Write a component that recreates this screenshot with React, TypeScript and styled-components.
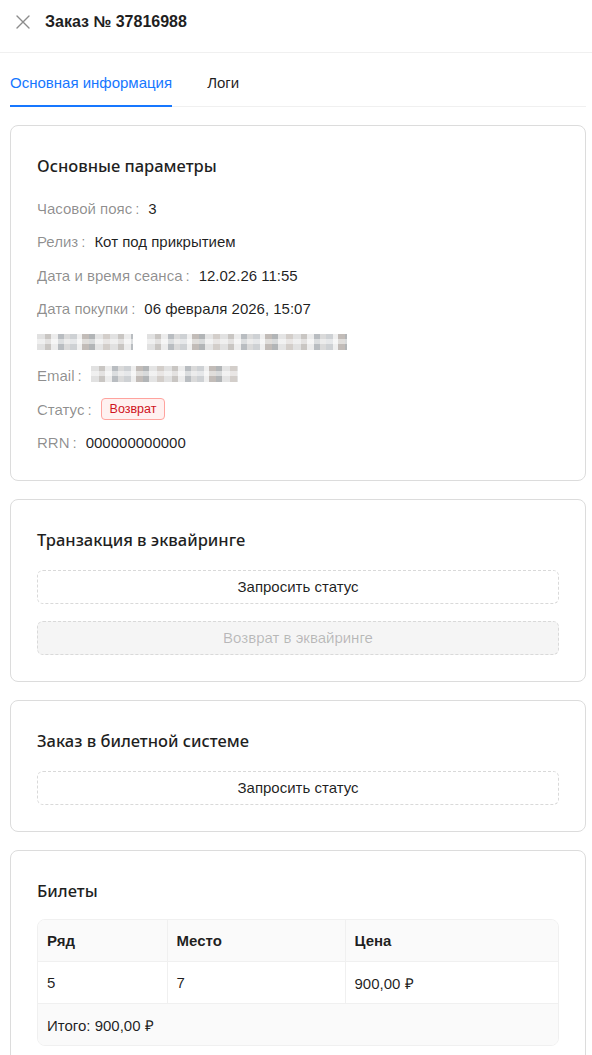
import React, { useState } from 'react';
import styled, { createGlobalStyle } from 'styled-components';

const GlobalStyle = createGlobalStyle`
  html, body {
    margin: 0;
    padding: 0;
    background: #fff;
    font-family: "Liberation Sans", Arial, sans-serif;
    color: rgba(0, 0, 0, 0.88);
  }
  * { box-sizing: border-box; }
`;

const Drawer = styled.div`
  width: 592px;
  min-height: 1055px;
  display: flex;
  flex-direction: column;
`;

const Header = styled.div`
  height: 53px;
  display: flex;
  align-items: center;
  gap: 13px;
  padding: 0 14px 8px;
  border-bottom: 1px solid #f0f0f0;
`;

const CloseBtn = styled.button`
  width: 18px;
  height: 18px;
  padding: 0;
  border: none;
  background: none;
  display: flex;
  align-items: center;
  justify-content: center;
  cursor: pointer;
`;

const Title = styled.div`
  font-size: 16px;
  font-weight: 700;
  color: #1f1f1f;
`;

const Body = styled.div`
  padding: 0 6px 0 10px;
  display: flex;
  flex-direction: column;
`;

const TabBar = styled.div`
  display: flex;
  gap: 35px;
  border-bottom: 1px solid #f0f0f0;
  margin-bottom: 18px;
`;

const Tab = styled.button<{ $active?: boolean }>`
  border: none;
  background: none;
  padding: 21px 0 14px;
  font-family: inherit;
  font-size: 15px;
  color: ${(p) => (p.$active ? '#1677ff' : 'rgba(0,0,0,0.88)')};
  border-bottom: 2px solid ${(p) => (p.$active ? '#1677ff' : 'transparent')};
  margin-bottom: -1px;
  cursor: pointer;
`;

const Cards = styled.div`
  display: flex;
  flex-direction: column;
  gap: 18px;
`;

const Card = styled.section`
  border: 1px solid #dcdcdc;
  border-radius: 8px;
  padding: 28px 26px 26px;
  background: #fff;
`;

const CardTitle = styled.h3`
  margin: 0 0 16px;
  font-family: "Noto Sans", "Open Sans", sans-serif;
  font-size: 16.5px;
  font-weight: 500;
  color: #1f1f1f;
  line-height: 24px;
`;

const DescList = styled.div`
  display: flex;
  flex-direction: column;
  gap: 11.5px;
  padding-top: 3px;
`;

const DescItem = styled.div`
  display: flex;
  align-items: center;
  height: 22px;
  font-size: 15px;
`;

const DescLabel = styled.span`
  color: rgba(0, 0, 0, 0.45);
  display: inline-flex;
  align-items: center;
  &::after {
    content: ':';
    margin: 0 9px 0 3px;
  }
`;

const DescValue = styled.span`
  color: rgba(0, 0, 0, 0.88);
`;

const Pixelated = styled.span<{ $w: number }>`
  display: inline-block;
  width: ${(p) => p.$w}px;
  height: 16px;
  background:
    linear-gradient(180deg, transparent 0 5px, rgba(255,255,255,0.5) 5px 10px, transparent 10px),
    repeating-linear-gradient(90deg,
      #dadada 0 8px, #bcb8b5 8px 14px, #e8e8e8 14px 21px, #a8adb2 21px 27px,
      #d1d1d1 27px 33px, #c2c6ca 33px 40px, #ececec 40px 45px, #b3aca7 45px 52px,
      #9fa3a6 52px 58px, #dedede 58px 66px, #c9c3be 66px 73px);
  opacity: 0.8;
`;

const Tag = styled.span`
  display: inline-block;
  font-size: 12.5px;
  line-height: 20px;
  padding: 0 8px;
  color: #cf1322;
  background: #fff1f0;
  border: 1px solid #ffa39e;
  border-radius: 4px;
`;

const ButtonStack = styled.div`
  display: flex;
  flex-direction: column;
  gap: 17px;
  padding-top: 2px;
`;

const DashedButton = styled.button<{ disabled?: boolean }>`
  height: 34px;
  width: 100%;
  border: 1px dashed #d9d9d9;
  border-radius: 6px;
  background: ${(p) => (p.disabled ? '#f5f5f5' : '#fff')};
  color: ${(p) => (p.disabled ? 'rgba(0,0,0,0.25)' : 'rgba(0,0,0,0.88)')};
  font-family: inherit;
  font-size: 15px;
  cursor: ${(p) => (p.disabled ? 'not-allowed' : 'pointer')};
`;

const TableWrap = styled.div`
  border: 1px solid #f0f0f0;
  border-radius: 8px;
  overflow: hidden;
  margin-top: 1px;
`;

const Table = styled.table`
  width: 100%;
  border-collapse: collapse;
  font-size: 15px;
`;

const Th = styled.th`
  background: #fafafa;
  text-align: left;
  font-weight: 700;
  height: 42px;
  padding: 0 9px;
  border-bottom: 1px solid #f0f0f0;
  & + & { border-left: 1px solid #f0f0f0; }
`;

const Td = styled.td`
  height: 42px;
  padding: 0 9px;
  border-bottom: 1px solid #f0f0f0;
  & + & { border-left: 1px solid #f0f0f0; }
`;

const Footer = styled.div`
  background: #fafafa;
  height: 41px;
  padding: 0 9px;
  display: flex;
  align-items: center;
  font-size: 15px;
`;

const Spacer = styled.span`
  width: 14px;
`;

const CloseIcon = () => (
  <svg width="16" height="16" viewBox="0 0 16 16" fill="none">
    <path d="M2 2L14 14M14 2L2 14" stroke="#8c8c8c" strokeWidth="1.4" strokeLinecap="round" />
  </svg>
);

type Row = { label: React.ReactNode; value: React.ReactNode; plain?: boolean };

const App = () => {
  const [tab, setTab] = useState('main');

  const rows: Row[] = [
    { label: 'Часовой пояс', value: '3' },
    { label: 'Релиз', value: 'Кот под прикрытием' },
    { label: 'Дата и время сеанса', value: '12.02.26 11:55' },
    { label: 'Дата покупки', value: '06 февраля 2026, 15:07' },
    { label: <Pixelated $w={96} />, value: <Pixelated $w={200} />, plain: true },
    { label: 'Email', value: <Pixelated $w={147} /> },
    { label: 'Статус', value: <Tag>Возврат</Tag> },
    { label: 'RRN', value: '000000000000' },
  ];

  return (
    <>
      <GlobalStyle />
      <Drawer>
        <Header>
          <CloseBtn aria-label="Закрыть">
            <CloseIcon />
          </CloseBtn>
          <Title>Заказ № 37816988</Title>
        </Header>
        <Body>
          <TabBar>
            <Tab $active={tab === 'main'} onClick={() => setTab('main')}>
              Основная информация
            </Tab>
            <Tab $active={tab === 'logs'} onClick={() => setTab('logs')}>
              Логи
            </Tab>
          </TabBar>
          <Cards>
            <Card>
              <CardTitle>Основные параметры</CardTitle>
              <DescList>
                {rows.map((r, i) => (
                  <DescItem key={i}>
                    {r.plain ? (
                      <>
                        {r.label}
                        <Spacer />
                        {r.value}
                      </>
                    ) : (
                      <>
                        <DescLabel>{r.label}</DescLabel>
                        <DescValue>{r.value}</DescValue>
                      </>
                    )}
                  </DescItem>
                ))}
              </DescList>
            </Card>

            <Card>
              <CardTitle>Транзакция в эквайринге</CardTitle>
              <ButtonStack>
                <DashedButton>Запросить статус</DashedButton>
                <DashedButton disabled>Возврат в эквайринге</DashedButton>
              </ButtonStack>
            </Card>

            <Card>
              <CardTitle>Заказ в билетной системе</CardTitle>
              <ButtonStack>
                <DashedButton>Запросить статус</DashedButton>
              </ButtonStack>
            </Card>

            <Card>
              <CardTitle>Билеты</CardTitle>
              <TableWrap>
                <Table>
                  <colgroup>
                    <col style={{ width: 129 }} />
                    <col style={{ width: 178 }} />
                    <col />
                  </colgroup>
                  <thead>
                    <tr>
                      <Th>Ряд</Th>
                      <Th>Место</Th>
                      <Th>Цена</Th>
                    </tr>
                  </thead>
                  <tbody>
                    <tr>
                      <Td>5</Td>
                      <Td>7</Td>
                      <Td>900,00 ₽</Td>
                    </tr>
                  </tbody>
                </Table>
                <Footer>Итого: 900,00 ₽</Footer>
              </TableWrap>
            </Card>
          </Cards>
        </Body>
      </Drawer>
    </>
  );
};

export default App;
